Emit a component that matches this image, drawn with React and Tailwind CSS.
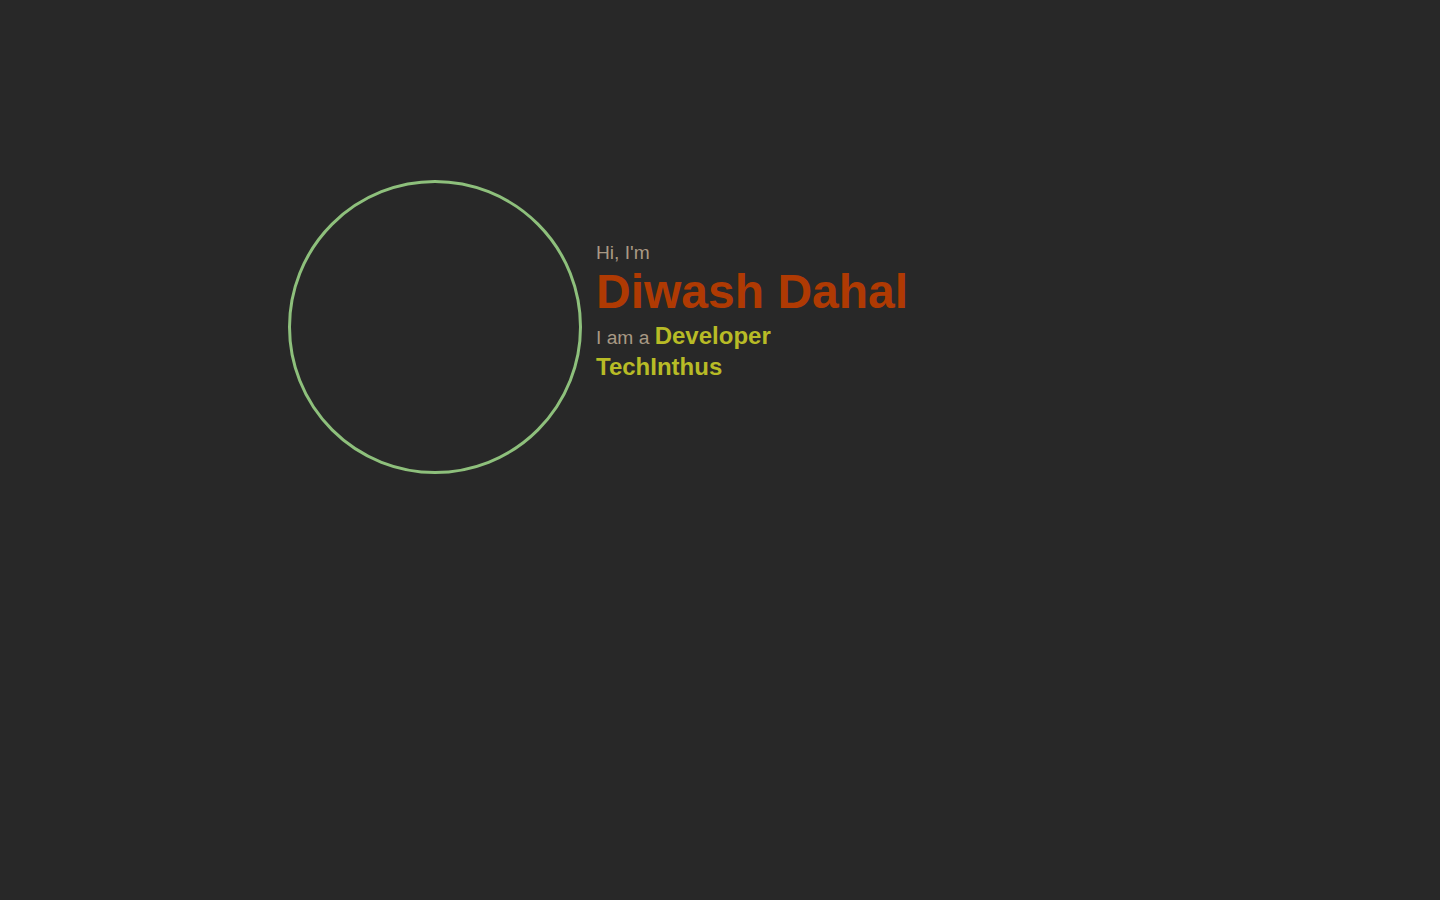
import React from "react";

/**
 *  Landing intro: avatar ring and greeting
 */
const App = () => {
   return (
      <div className="min-h-screen w-full bg-[#282828] font-['Liberation_Sans',Arial,sans-serif]">
         <div className="flex items-start gap-[14px] pl-[288px] pt-[180px]">
            {/* Avatar placeholder ring */}
            <div className="w-[294px] h-[294px] rounded-full border-[3px] border-[#8ec07c] shrink-0"></div>
            <div className="flex flex-col mt-[61px]">
               <p className="text-[19.2px] leading-[23px] text-[#a89984]">Hi, I'm</p>
               <h1 className="text-[48px] leading-[56px] font-bold text-[#af3a03]">
                  Diwash Dahal
               </h1>
               <p className="text-[19.2px] leading-[31px] text-[#a89984]">
                  I am a{" "}
                  <span className="text-[24px] font-bold text-[#b8bb26]">Developer</span>
               </p>
               <p className="text-[24px] leading-[28px] font-bold text-[#b8bb26]">TechInthus</p>
            </div>
         </div>
      </div>
   );
};

export default App;
